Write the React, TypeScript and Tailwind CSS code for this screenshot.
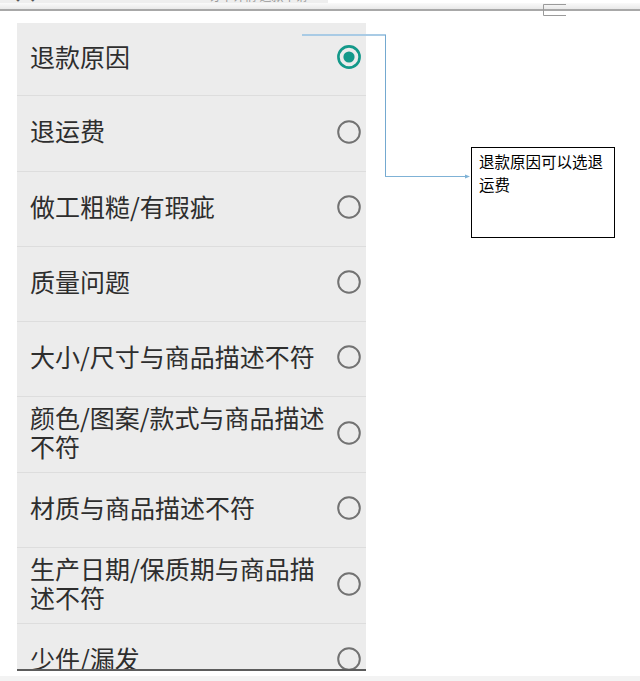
import React from 'react';

const reasons: { label: string; h: string }[] = [
  { label: '退款原因', h: 'h-[73px]' },
  { label: '退运费', h: 'h-[76px]' },
  { label: '做工粗糙/有瑕疵', h: 'h-[75px]' },
  { label: '质量问题', h: 'h-[75px]' },
  { label: '大小/尺寸与商品描述不符', h: 'h-[75px]' },
  { label: '颜色/图案/款式与商品描述不符', h: 'h-[76px]' },
  { label: '材质与商品描述不符', h: 'h-[75px]' },
  { label: '生产日期/保质期与商品描述不符', h: 'h-[76px]' },
  { label: '少件/漏发', h: 'h-[75px]' },
];

function Radio({ on }: { on: boolean }) {
  return (
    <svg width="24" height="24" viewBox="0 0 24 24" className="shrink-0">
      {on ? (
        <>
          <circle cx="12" cy="12" r="10.6" fill="none" stroke="#14998a" strokeWidth="2.6" />
          <circle cx="12" cy="12" r="5.6" fill="#14998a" />
        </>
      ) : (
        <circle cx="12" cy="12" r="10.8" fill="none" stroke="#727272" strokeWidth="2" />
      )}
    </svg>
  );
}

export default function App() {
  return (
    <div className="relative h-[681px] w-[640px] overflow-hidden bg-white flex flex-col font-['Noto_Sans_CJK_SC',sans-serif]">
      {/* clipped tail of the window above */}
      <div className="h-[3px] w-[328px] bg-[#eeeeee] shrink-0 overflow-hidden flex text-[12px] leading-[14px] text-[#9a9a9a]">
        <span className="-mt-[11px] ml-[12px] text-[#555555]">◆ ◆</span>
        <span className="-mt-[11px] ml-[170px]">订单详情 退款申请 ·</span>
      </div>
      <div className="h-[6px] bg-gradient-to-b from-[#fafafa] to-[#e9e9e9] shrink-0" />
      <div className="h-[2px] bg-[#a8a8a8] shrink-0" />
      <div className="flex-1 flex items-start pl-[17px] pt-[12px]">
        <div className="w-[349px] h-[648px] bg-[#ececec] overflow-hidden border-b-2 border-[#5c5c5c] flex flex-col">
          {reasons.map((r, i) => (
            <div
              key={r.label}
              className={`${r.h} shrink-0 flex items-center pl-[13px] pr-[5px] pb-[4px] gap-[5px] border-b border-[#dddddd]`}
            >
              <div className="w-[302px] pb-[2px] text-[25px] leading-[29px] text-[#2e2e2e]">{r.label}</div>
              <Radio on={i === 0} />
            </div>
          ))}
        </div>
      </div>
      <div className="h-[5px] bg-[#f3f3f3] shrink-0" />

      {/* annotation overlay */}
      <svg className="absolute left-0 top-0 pointer-events-none" width="640" height="681">
        <path d="M566 4.5H543.5V15.5H566" fill="none" stroke="#9a9a9a" strokeWidth="1" />
        <line x1="302" y1="35" x2="386" y2="35" stroke="#a9cbe5" strokeWidth="2" />
        <line x1="385.5" y1="35" x2="385.5" y2="177" stroke="#74a9d0" strokeWidth="1" />
        <line x1="385" y1="176.5" x2="466" y2="176.5" stroke="#7fb2d6" strokeWidth="1" />
        <path d="M465 174.5L470 176.5L465 178.5Z" fill="#7fb2d6" />
      </svg>
      <div className="absolute left-[471px] top-[147px] w-[144px] h-[91px] border border-black bg-white pl-[7px] pr-[10px] pt-[2px] text-[15.5px] leading-[23px] text-black">
        退款原因可以选退运费
      </div>
    </div>
  );
}
